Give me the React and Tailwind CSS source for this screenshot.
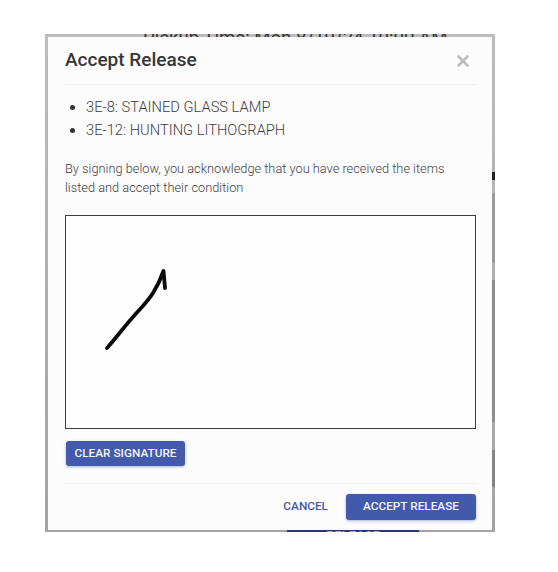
import React from 'react'
import { X } from 'lucide-react'

const items = ['3E-8: STAINED GLASS LAMP', '3E-12: HUNTING LITHOGRAPH']

export default function App() {
  return (
    <div className="min-h-screen bg-white pl-[45px] pt-[34px] font-['Roboto',sans-serif]">
      <div className="relative h-[498px] w-[450px] overflow-hidden bg-gradient-to-b from-[#bcbcbe] to-[#a3a3a5]">
        {/* page behind the dialog, only a sliver shows */}
        <p className="absolute left-[98px] top-[-7px] whitespace-nowrap text-[18.6px] leading-[22px] text-[#333]">
          Pickup Time: Mon 8/19/24 10:00 AM
        </p>
        <div className="absolute right-0 top-[159px] h-[70px] w-[3px] bg-[#9a9a9c]" />
        <div className="absolute right-0 top-[138px] h-[8px] w-[3px] bg-[#222]" />
        <div className="absolute right-0 top-[246px] h-[142px] w-[3px] bg-[#8e8e90]" />
        <div className="absolute right-0 top-[416px] h-[37px] w-[3px] bg-[#858587]" />
        <div className="absolute bottom-0 left-[242px] h-[3px] w-[132px] overflow-hidden bg-[#26386f]">
          <p className="mt-[-1px] text-center text-[13px] leading-[16px] font-medium text-[#aab]">RELEASE</p>
        </div>

        <div className="absolute inset-x-[3px] bottom-[2px] top-[3px] flex flex-col bg-[#fcfcfd] pl-[17px] pr-[16px]">
          <div className="flex h-[48px] items-center justify-between border-b border-[#f0f0f2]">
            <h2 className="text-[19px] font-medium text-[#36363a]">Accept Release</h2>
            <X size={18} strokeWidth={3.5} className="mr-[4px] text-[#bcbcbe]" />
          </div>

          <ul className="mt-[11px] list-disc pl-[21px] text-[14.7px] leading-[23px] font-light text-[#3c3c40] marker:text-[#333]">
            {items.map((item) => (
              <li key={item}>{item}</li>
            ))}
          </ul>

          <p className="mt-[17px] w-[400px] text-[12.8px] leading-[19px] font-light text-[#3f3f44]">
            By signing below, you acknowledge that you have received the items listed and accept their condition
          </p>

          <div className="mt-[18px] h-[214px] w-[411px] border border-[#3c3c3e] bg-[#fefefe]">
            <svg width="409" height="212" viewBox="0 0 409 212" fill="none">
              <path d="M41 132 C50 122 58 111 67 101 C75 92 82 85 87 77 C92 69 95 62 97.5 55 L99 72" stroke="#0a0a0a" strokeWidth="3.8" strokeLinecap="round" strokeLinejoin="round" />
            </svg>
          </div>

          <button className="ml-[1px] mt-[12px] h-[25px] w-[119px] self-start rounded-[3px] bg-[#4359ab] text-[11.8px] font-medium text-[#f4f5fa] shadow-[0_1px_3px_rgba(67,89,171,0.45)]">
            CLEAR SIGNATURE
          </button>

          <div className="mt-[17px] flex items-center justify-end border-t border-[#f3f3f7] pt-[10px]">
            <button className="mr-[18px] text-[11.8px] font-medium text-[#4359ab]">CANCEL</button>
            <button className="h-[26px] w-[130px] rounded-[3px] bg-[#4359ab] text-[11.8px] font-medium text-[#f4f5fa] shadow-[0_1px_3px_rgba(67,89,171,0.45)]">
              ACCEPT RELEASE
            </button>
          </div>
        </div>
      </div>
    </div>
  )
}
